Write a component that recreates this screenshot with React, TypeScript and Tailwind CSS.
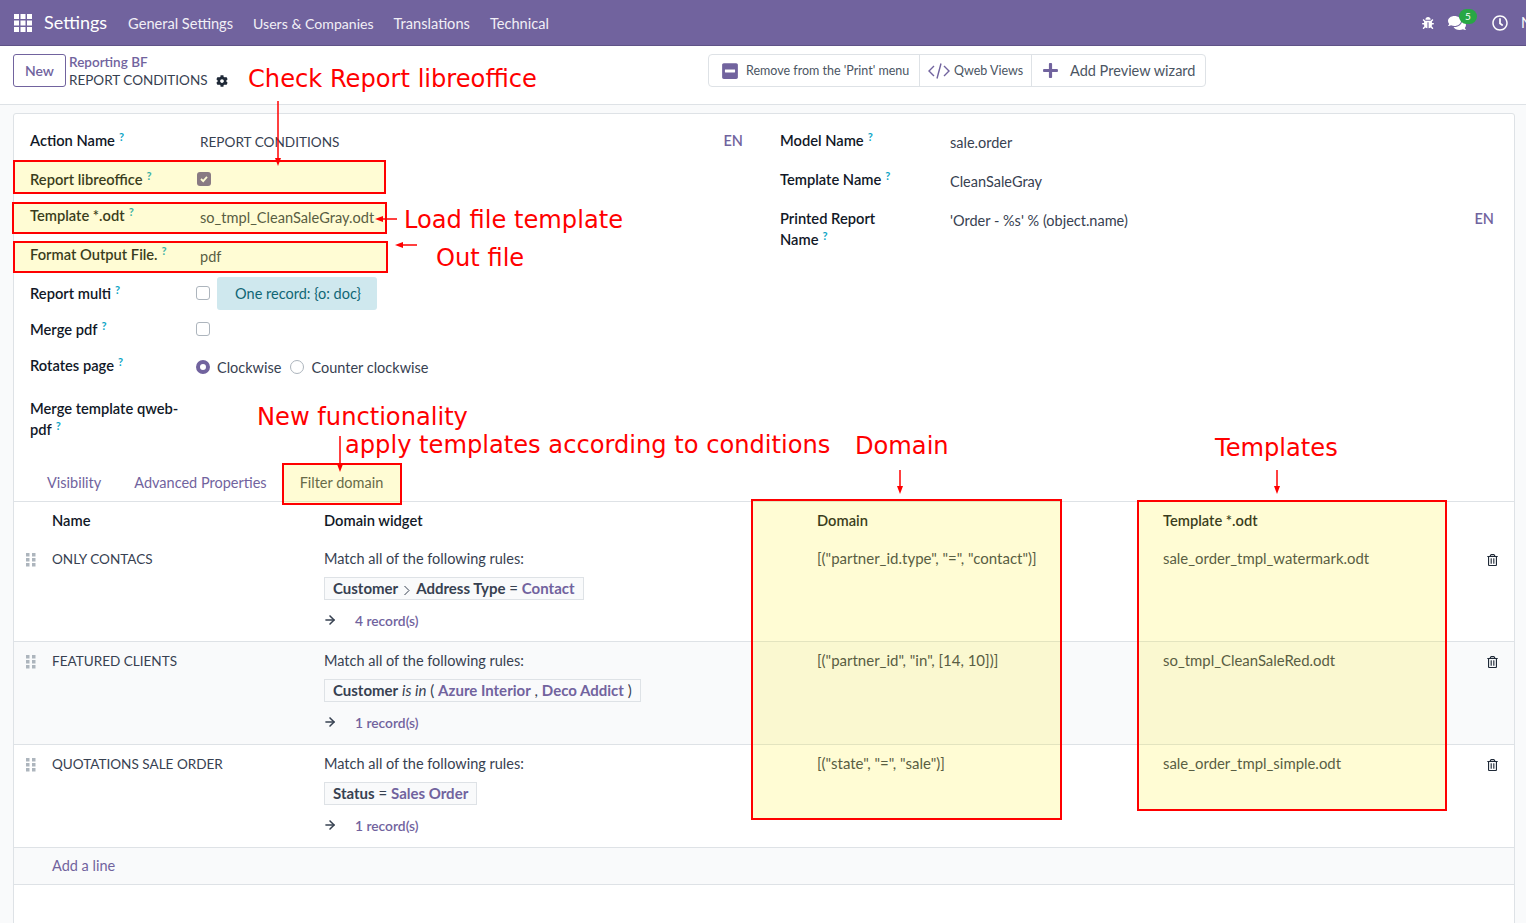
import { FaBug, FaCog, FaComments, FaMinusSquare, FaPlus, FaRegClock, FaRegTrashAlt } from "react-icons/fa";
import { ArrowRight } from "lucide-react";
import type { ReactNode } from "react";

const AppsIcon = () => (
  <svg width="18" height="18" viewBox="0 0 18 18" fill="#fff">
    {[0, 6.5, 13].map((y) =>
      [0, 6.5, 13].map((x) => <rect key={`${x}-${y}`} x={x} y={y} width="5" height="5" />)
    )}
  </svg>
);

const DragHandle = () => (
  <svg width="10" height="14" viewBox="0 0 10 14" fill="#adb5bd">
    {[0, 5, 10].map((y) =>
      [0, 6].map((x) => <rect key={`${x}-${y}`} x={x} y={y} width="3.5" height="3.5" />)
    )}
  </svg>
);

const Help = () => <sup className="ml-1 text-[11px] font-bold text-[#0ea5c6]">?</sup>;

const Label = ({ children }: { children: ReactNode }) => (
  <div className="w-[170px] shrink-0 text-[14.7px] font-semibold leading-[21px] text-[#111827]">
    {children}
    <Help />
  </div>
);

const Checkbox = () => <span className="block h-[14px] w-[14px] rounded-[3px] border border-[#adb5bd] bg-white" />;

const Note = ({ className, children }: { className: string; children: ReactNode }) => (
  <div className={`absolute whitespace-nowrap text-[24.15px] text-[#ff0000] [font-family:'DejaVu_Sans',sans-serif] ${className}`}>
    {children}
  </div>
);

const Box = ({ className }: { className: string }) => (
  <div className={`absolute border-2 border-[#ff0000] bg-[#ffee00]/[0.17] ${className}`} />
);

// red arrow annotations, drawn in page coordinates
const Arrows = () => (
  <svg className="absolute left-0 top-0 pointer-events-none" width="1526" height="923" fill="none">
    <g stroke="#ff0000" strokeWidth="1.5">
      <path d="M278 101V160" />
      <path d="M397 219H382" />
      <path d="M417 245H402" />
      <path d="M340 436V466" />
      <path d="M900 470V488" />
      <path d="M1277 470V488" />
    </g>
    <g fill="#ff0000">
      <path d="M278 166L275 158H281Z" />
      <path d="M375 219L383 216V222Z" />
      <path d="M395 245L403 242V248Z" />
      <path d="M340 472L337 464H343Z" />
      <path d="M900 494L897 486H903Z" />
      <path d="M1277 494L1274 486H1280Z" />
    </g>
  </svg>
);

const rows = [
  {
    name: "ONLY CONTACS",
    domain: '[("partner_id.type", "=", "contact")]',
    template: "sale_order_tmpl_watermark.odt",
    records: "4 record(s)",
    height: "h-[102px]",
    bg: "bg-white",
    rule: (
      <>
        <b className="font-bold">Customer</b>
        <svg width="10" height="12" viewBox="0 0 10 12" fill="none" stroke="#374151" className="mx-[4px] inline-block align-[-2px]">
          <path d="M2.5 2L7 6.5L2.5 11" />
        </svg>
        <b className="font-bold">Address Type</b> = <b className="font-bold text-[#71639e]">Contact</b>
      </>
    ),
  },
  {
    name: "FEATURED CLIENTS",
    domain: '[("partner_id", "in", [14, 10])]',
    template: "so_tmpl_CleanSaleRed.odt",
    records: "1 record(s)",
    height: "h-[103px]",
    bg: "bg-[#f9fafb]",
    rule: (
      <>
        <b className="font-bold">Customer</b> <i>is in</i> ({" "}
        <b className="font-bold text-[#71639e]">Azure Interior</b> , <b className="font-bold text-[#71639e]">Deco Addict</b> )
      </>
    ),
  },
  {
    name: "QUOTATIONS SALE ORDER",
    domain: '[("state", "=", "sale")]',
    template: "sale_order_tmpl_simple.odt",
    records: "1 record(s)",
    height: "h-[103px]",
    bg: "bg-white",
    rule: (
      <>
        <b className="font-bold">Status</b> = <b className="font-bold text-[#71639e]">Sales Order</b>
      </>
    ),
  },
];

export default function App() {
  return (
    <div className="relative h-[923px] w-[1526px] overflow-hidden bg-[#f9fafb] text-[14.5px] text-[#374151] [font-family:Lato,sans-serif]">
      {/* Navbar */}
      <div className="flex h-[46px] items-center border-b border-[#5f5387] bg-[#71639e] pl-[14px] text-white">
        <AppsIcon />
        <span className="ml-[12px] text-[18px]">Settings</span>
        <nav className="ml-[21px] flex gap-[20px] pt-[2px] text-[14.6px] text-[#f1eff6]">
          <span>General Settings</span>
          <span className="text-[14.1px] leading-[22px]">Users &amp; Companies</span>
          <span>Translations</span>
          <span>Technical</span>
        </nav>
        <div className="ml-auto flex items-center">
          <FaBug className="mr-[14px] h-[12px] w-[12px]" />
          <div className="relative mr-[26px]">
            <FaComments className="h-[18px] w-[18px]" />
            <span className="absolute -right-[11px] -top-[5px] flex h-[15px] w-[18px] items-center justify-center rounded-full bg-[#28a745] text-[10px]">
              5
            </span>
          </div>
          <FaRegClock className="mr-[13px] h-[16px] w-[16px]" />
          <span className="w-[5px] overflow-hidden">N</span>
        </div>
      </div>

      {/* Control panel */}
      <div className="flex h-[59px] items-start border-b border-[#dee2e6] bg-white pl-[13px] pt-[8px]">
        <button className="h-[33px] w-[53px] rounded-[3px] border border-[#71639e] text-[14px] font-semibold text-[#71639e]">New</button>
        <div className="ml-[3px] w-[639px] leading-[17px]">
          <div className="text-[13.5px] font-semibold text-[#71639e]">Reporting BF</div>
          <div className="mt-[1px] flex items-center text-[13.5px] text-[#374151]">
            REPORT CONDITIONS <FaCog className="ml-[8px] h-[12px] w-[12px] text-[#1f2937]" />
          </div>
        </div>
        <div className="flex h-[33px] items-center rounded-[4px] border border-[#dee2e6] text-[#4b5563]">
          <div className="flex h-full w-[211px] items-center border-r border-[#dee2e6] pl-[12px] text-[12.5px]">
            <FaMinusSquare className="mr-[7px] h-[18px] w-[18px] text-[#71639e]" />
            <span className="pt-[2px]">Remove from the 'Print' menu</span>
          </div>
          <div className="flex h-full w-[112px] items-center border-r border-[#dee2e6] pl-[8px] text-[12.5px]">
            <svg width="22" height="16" viewBox="0 0 22 16" fill="none" stroke="#71639e" strokeWidth="1.4" className="mr-[4px]">
              <path d="M6 3L1 8L6 13M16 3L21 8L16 13M13 0.5L9 15.5" />
            </svg>
            <span className="pt-[2px]">Qweb Views</span>
          </div>
          <div className="flex h-full w-[173px] items-center pl-[10px]">
            <FaPlus className="mr-[11px] h-[17px] w-[17px] text-[#71639e]" />
            Add Preview wizard
          </div>
        </div>
      </div>

      {/* Form sheet */}
      <div className="ml-[13px] mr-[11px] mt-[8px] h-[830px] rounded-t-[3px] border border-[#dee2e6] bg-white">
        <div className="flex h-[347px]">
          <div className="w-[729px] shrink-0 pl-[16px]">
            <div className="mt-[16px] flex h-[21px]">
              <Label>Action Name</Label>
              <span className="mt-[2px] flex-1 text-[13.6px]">REPORT CONDITIONS</span>
              <span className="font-semibold text-[#71639e]">EN</span>
            </div>
            <div className="mt-[18px] flex h-[21px]">
              <Label>Report libreoffice</Label>
              <span className="-ml-[3px] mt-[3px] flex h-[14px] w-[14px] items-center justify-center rounded-[3px] bg-[#71639e]">
                <svg width="10" height="10" viewBox="0 0 10 10" fill="none" stroke="#fff" strokeWidth="1.8">
                  <path d="M2 5L4.2 7.2L8 2.8" />
                </svg>
              </span>
            </div>
            <div className="mt-[15px] flex h-[21px]">
              <Label>Template *.odt</Label>
              <span className="mt-[2px] text-[14.6px]">so_tmpl_CleanSaleGray.odt</span>
            </div>
            <div className="mt-[18px] flex h-[21px]">
              <Label>Format Output File.</Label>
              <span className="mt-[2px]">pdf</span>
            </div>
            <div className="mt-[18px] flex h-[21px]">
              <Label>Report multi</Label>
              <span className="-ml-[4px] mt-[3px]"><Checkbox /></span>
              <span className="-mt-[6px] ml-[7px] flex h-[33px] w-[160px] shrink-0 items-center justify-center rounded-[3px] bg-[#cfe8ee] pl-[2px] text-[#0f6675]">
                One record: {"{o: doc}"}
              </span>
            </div>
            <div className="mt-[15px] flex h-[21px]">
              <Label>Merge pdf</Label>
              <span className="-ml-[4px] mt-[3px]"><Checkbox /></span>
            </div>
            <div className="mt-[15px] flex h-[21px] items-start">
              <Label>Rotates page</Label>
              <span className="-ml-[4px] mt-[5px] block h-[14px] w-[14px] rounded-full border-[4px] border-[#71639e] bg-white" />
              <span className="ml-[7px] mt-[2px]">Clockwise</span>
              <span className="ml-[9px] mt-[5px] block h-[14px] w-[14px] rounded-full border border-[#adb5bd]" />
              <span className="ml-[7px] mt-[2px]">Counter clockwise</span>
            </div>
            <div className="mt-[22px] w-[160px] text-[14.7px] font-semibold leading-[21px] text-[#111827]">
              Merge template qweb-pdf
              <Help />
            </div>
          </div>
          <div className="flex-1 pl-[37px] pr-[20px]">
            <div className="mt-[16px] flex h-[21px]">
              <Label>Model Name</Label>
              <span className="mt-[2px]">sale.order</span>
            </div>
            <div className="mt-[18px] flex h-[21px]">
              <Label>Template Name</Label>
              <span className="mt-[2px]">CleanSaleGray</span>
            </div>
            <div className="mt-[18px] flex">
              <div className="w-[170px] shrink-0 pr-[60px] text-[14.7px] font-semibold leading-[21px] text-[#111827]">
                Printed Report Name
                <Help />
              </div>
              <span className="mt-[2px] flex-1">'Order - %s' % (object.name)</span>
              <span className="font-semibold text-[#71639e]">EN</span>
            </div>
          </div>
        </div>

        {/* Tabs */}
        <div className="flex h-[41px] items-center border-b border-[#dee2e6] pl-[33px] pt-[4px] text-[#71639e]">
          <span>Visibility</span>
          <span className="ml-[33px]">Advanced Properties</span>
          <span className="ml-[33px] text-[#495057]">Filter domain</span>
        </div>

        {/* Lines */}
        <div className="grid h-[38px] grid-cols-[38px_272px_493px_346px_1fr] items-center pb-[2px] text-[14.7px] font-semibold text-[#111827]">
          <span />
          <span>Name</span>
          <span>Domain widget</span>
          <span>Domain</span>
          <span>Template *.odt</span>
        </div>
        {rows.map((row) => (
          <div key={row.name} className={`grid grid-cols-[38px_272px_493px_346px_1fr] border-b border-[#dee2e6] ${row.height} ${row.bg}`}>
            <div className="pl-[12px] pt-[13px]">
              <DragHandle />
            </div>
            <div className="pt-[8px] text-[13.55px] leading-[22px]">{row.name}</div>
            <div className="pt-[8px]">
              <div>Match all of the following rules:</div>
              <div className="mt-[7px] flex">
                <span className="inline-block h-[23px] whitespace-pre border border-[#dee2e6] bg-[#f9fafb] px-[8px] text-[15px] leading-[21px]">
                  {row.rule}
                </span>
              </div>
              <div className="mt-[11px] flex items-center">
                <ArrowRight size={14} strokeWidth={2.6} className="-ml-[1px] -mt-[2px] text-[#374151]" />
                <span className="ml-[18px] text-[13.8px] font-semibold text-[#71639e]">{row.records}</span>
              </div>
            </div>
            <div className="pt-[7px] text-[15px] leading-[22px]">{row.domain}</div>
            <div className="flex justify-between pr-[16px] pt-[7px] text-[14.9px] leading-[22px]">
              <span>{row.template}</span>
              <FaRegTrashAlt className="mt-[7px] h-[12px] w-[11px] text-[#1f2937]" />
            </div>
          </div>
        ))}
        <div className="flex h-[37px] items-center border-b border-[#dee2e6] bg-[#f9fafb] pl-[38px] text-[#71639e]">Add a line</div>
      </div>

      {/* Annotations */}
      <Box className="left-[13px] top-[160px] h-[34px] w-[373px]" />
      <Box className="left-[12px] top-[202px] h-[32px] w-[375px]" />
      <Box className="left-[13px] top-[241px] h-[32px] w-[375px]" />
      <Box className="left-[282px] top-[463px] h-[42px] w-[120px]" />
      <Box className="left-[751px] top-[499px] h-[321px] w-[311px]" />
      <Box className="left-[1137px] top-[500px] h-[311px] w-[310px]" />
      <Note className="left-[248px] top-[61px]">Check Report libreoffice</Note>
      <Note className="left-[404px] top-[202px]">Load file template</Note>
      <Note className="left-[436px] top-[240px]">Out file</Note>
      <Note className="left-[257px] top-[399px]">New functionality</Note>
      <Note className="left-[345px] top-[427px]">apply templates according to conditions</Note>
      <Note className="left-[855px] top-[428px]">Domain</Note>
      <Note className="left-[1215px] top-[430px]">Templates</Note>
      <Arrows />
    </div>
  );
}
